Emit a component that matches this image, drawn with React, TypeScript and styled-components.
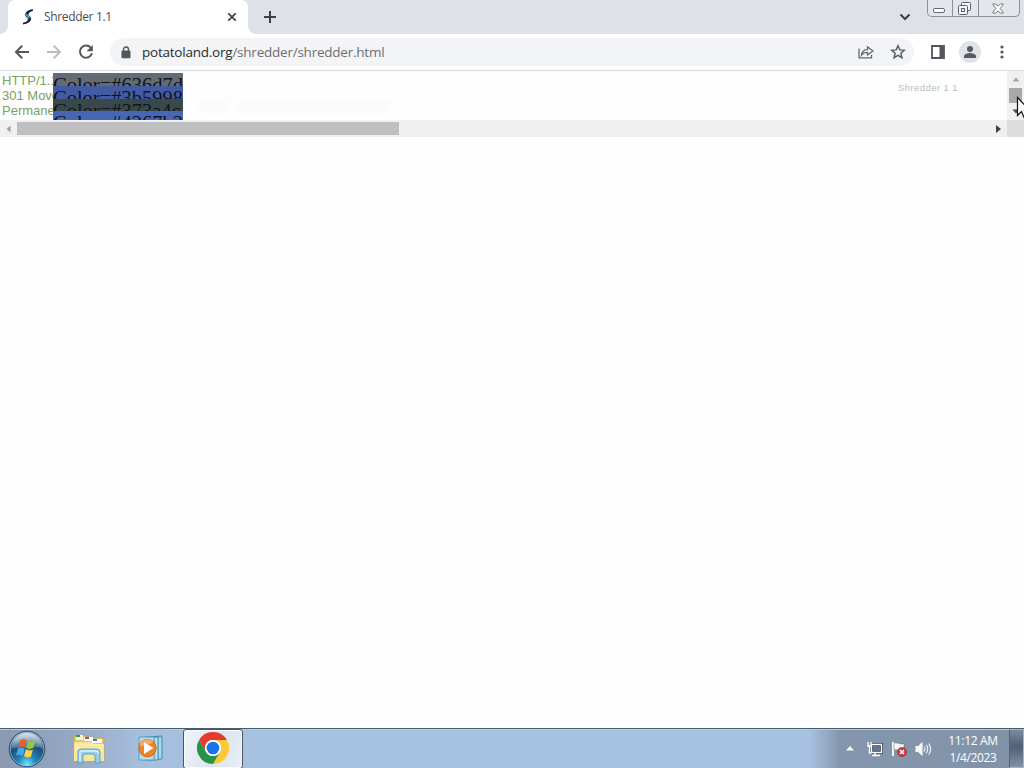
import React from 'react';
import styled, { createGlobalStyle } from 'styled-components';

const GlobalStyle = createGlobalStyle`
  * { box-sizing: border-box; }
  html, body { margin: 0; padding: 0; background: #fff; overflow: hidden; }
  svg { display: block; flex: none; }
`;

const Screen = styled.div`
  width: 1024px;
  height: 768px;
  display: flex;
  flex-direction: column;
  background: #fefefe;
  overflow: hidden;
  font-family: "Open Sans", "Noto Sans", sans-serif;
`;

const TabStrip = styled.header`
  height: 34px;
  display: flex;
  background: #dee1e6;
`;

const TabEdge = styled.div<{ $side: 'left' | 'right' }>`
  width: 8px;
  height: 34px;
  background: radial-gradient(circle at ${p => (p.$side === 'left' ? '0 26px' : '8px 26px')}, #dee1e6 7.5px, #fff 8px) no-repeat 0 100% / 8px 8px;
  background-image: radial-gradient(circle at ${p => (p.$side === 'left' ? '0 0' : '8px 0')}, #dee1e6 7.5px, #fff 8px);
`;

const Tab = styled.div`
  width: 240px;
  height: 34px;
  display: flex;
  align-items: center;
  background: #fff;
  border-radius: 7px 7px 0 0;
  padding: 0 10px 0 12px;
`;

const TabTitle = styled.span`
  flex: 1;
  margin-left: 8px;
  font-size: 12px;
  line-height: 16px;
  letter-spacing: -0.35px;
  color: #4b4e52;
`;

const NewTab = styled.div`
  width: 36px;
  height: 34px;
  display: flex;
  align-items: center;
  padding-left: 7px;
`;

const TabSearch = styled.div`
  margin-left: auto;
  margin-right: 16px;
  padding-top: 13px;
`;

const WindowButtons = styled.div`
  display: flex;
  width: 93px;
  height: 17px;
  margin-right: 4px;
  border: 1px solid #8b9096;
  border-top: 0;
  border-radius: 0 0 5px 5px;
  background: #e3e6ea;
`;

const WindowButton = styled.div<{ $w: number }>`
  width: ${p => p.$w}px;
  height: 16px;
  display: flex;
  align-items: center;
  justify-content: center;
  padding-right: 2px;
  & + & { border-left: 1px solid #8b9096; }
`;

const Toolbar = styled.nav`
  height: 37px;
  display: flex;
  align-items: center;
  background: #fff;
  border-bottom: 1px solid #d6d9dd;
  padding-left: 14px;
`;

const NavButton = styled.div`
  width: 16px;
  height: 16px;
  margin-right: 16px;
`;

const AddressBar = styled.div`
  width: 804px;
  height: 28px;
  display: flex;
  align-items: center;
  background: #f3f4f6;
  border-radius: 14px;
  padding: 0 8px 0 11px;
`;

const Url = styled.div`
  flex: 1;
  margin-left: 11px;
  font-size: 13.5px;
  line-height: 18px;
  letter-spacing: -0.23px;
  color: #6b6f74;
  white-space: nowrap;
`;

const Host = styled.span`
  color: #2a2d31;
`;

const BarIcon = styled.div<{ $ml: number }>`
  margin-left: ${p => p.$ml}px;
`;

const Avatar = styled.div`
  width: 22px;
  height: 22px;
  margin: 0 19px 0 13px;
  border-radius: 50%;
  background: #dfe3e7;
  display: flex;
  align-items: center;
  justify-content: center;
`;

const Page = styled.main`
  flex: 1;
  background: #fefefe;
`;

const Frame = styled.section`
  height: 66px;
  display: flex;
`;

const FrameBody = styled.div`
  width: 1007px;
  display: flex;
  flex-direction: column;
`;

const FrameView = styled.div`
  height: 49px;
  display: flex;
  overflow: hidden;
`;

const Response = styled.div`
  width: 53px;
  padding: 2px 0 0 2px;
  font: 13px/15px "Liberation Sans", Arial, sans-serif;
  color: #79a267;
  white-space: nowrap;
  overflow: hidden;
`;

const Swatches = styled.div`
  width: 130px;
  padding-top: 2px;
`;

const Swatch = styled.div<{ $h: number; $bg: string }>`
  height: ${p => p.$h}px;
  background: ${p => p.$bg};
  color: #10141c;
  padding-top: 1px;
  font: 20.5px/23px "Liberation Serif", "Times New Roman", serif;
  white-space: nowrap;
  overflow: hidden;
`;

const Ghost = styled.div`
  width: 190px;
  height: 12px;
  margin: 29px 0 0 17px;
  background: linear-gradient(90deg, #fafafa 15%, #fdfdfd 15% 20%, #fafafa 20%);
  filter: blur(2px);
`;

const FrameTitle = styled.div`
  margin: 10px 49px 0 auto;
  font: 9.5px/13px "Liberation Sans", Arial, sans-serif;
  letter-spacing: 0.42px;
  color: #bcbcbc;
  white-space: nowrap;
`;

const HScroll = styled.div`
  height: 17px;
  display: flex;
  align-items: center;
  background: #f0f0f0;
`;

const HThumb = styled.div`
  width: 382px;
  height: 13px;
  background: #bfbfbf;
`;

const HArrow = styled.div<{ $end?: boolean }>`
  width: 17px;
  display: flex;
  justify-content: center;
  margin-left: ${p => (p.$end ? 'auto' : '0')};
`;

const VScroll = styled.div`
  width: 17px;
  height: 66px;
  display: flex;
  flex-direction: column;
  align-items: center;
  background: linear-gradient(#f0f0f0 49px, #dcdcdc 49px);
  padding-top: 6px;
`;

const VThumb = styled.div`
  width: 13px;
  height: 15px;
  margin: 6px 0;
  background: #a8a8a8;
`;

const Cursor = styled.svg`
  position: absolute;
  left: 1016px;
  top: 96px;
`;

const Taskbar = styled.footer`
  height: 40px;
  display: flex;
  align-items: center;
  border-top: 1px solid #475c6d;
  box-shadow: inset 0 1px 0 #b9cce2;
  background: linear-gradient(90deg, #8999b0 0, #93a5bf 60px, #a5bedc 140px, #a7c1e0 250px, #a7c1e0 810px, #8496ad 840px, #8293a8 1024px);
`;

const TaskItem = styled.div<{ $ml: number }>`
  margin-left: ${p => p.$ml}px;
`;

const ActiveTask = styled.div`
  width: 60px;
  height: 40px;
  margin: 0 0 0 18px;
  padding-bottom: 2px;
  display: flex;
  align-items: center;
  justify-content: center;
  border: 1px solid #44576c;
  border-radius: 3px;
  box-shadow: inset 0 0 0 1px #f8fafc;
  background: linear-gradient(110deg, #f1f4f8, #dce4ee 55%, #e9eef4);
`;

const Tray = styled.div`
  margin-left: auto;
  display: flex;
  align-items: center;
`;

const Clock = styled.div`
  width: 72px;
  padding-top: 1px;
  text-align: center;
  font-size: 12px;
  line-height: 17px;
  letter-spacing: -0.35px;
  color: #fff;
`;

const ShowDesktop = styled.div`
  width: 15px;
  height: 39px;
  border: 1px solid #a8b5c4;
  border-left-color: #53647a;
  background: linear-gradient(#7b8b9f, #4f6077 45%, #8291a5);
`;

const SWATCHES = [
  { label: 'Color=#636d7d', bg: '#636b75', h: 13 },
  { label: 'Color=#3b5998', bg: '#435ba2', h: 13 },
  { label: 'Color=#373a4c', bg: '#39494b', h: 12 },
  { label: 'Color=#4267b2', bg: '#4767b5', h: 9 },
];

const Favicon = () => (
  <svg width="16" height="16" viewBox="0 0 16 16" fill="none">
    <path d="M13.2.8C8.6.6 5 3 5.1 6.2c.2 2.1 2.7 2.2 2.7 3.7 0 2-2.1 3.7-5.6 5.1 5.3-.1 8.7-2.4 8.9-5.5.1-2.3-2.6-2.6-2.5-4.1.1-1.6 1.7-2.7 4.6-4.6Z" fill="#20435c" />
    <path d="M6.4 5.2c.1 1.7 2.5 2.2 2.8 4" stroke="#3fa9bb" strokeWidth="2" />
    <path d="M12.8 1.1C9.8 1.5 7.6 2.7 7 4.6" stroke="#161d32" strokeWidth="1.8" />
    <path d="M10.2 9.3c0 2.4-3.2 4.6-7.2 5.4" stroke="#2d1c38" strokeWidth="1.7" />
  </svg>
);

const StartOrb = () => (
  <svg width="38" height="38" viewBox="0 0 38 38">
    <defs>
      <radialGradient id="orb" cx=".5" cy=".92" r=".85">
        <stop offset="0" stopColor="#6be6ff" />
        <stop offset=".3" stopColor="#2384b8" />
        <stop offset=".65" stopColor="#1c4e7c" />
        <stop offset="1" stopColor="#7e9eb7" />
      </radialGradient>
      <linearGradient id="shine" x2="0" y2="1">
        <stop stopColor="#fff" stopOpacity=".68" />
        <stop offset="1" stopColor="#fff" stopOpacity=".14" />
      </linearGradient>
    </defs>
    <circle cx="19" cy="19" r="17.8" fill="url(#orb)" stroke="#284966" />
    <circle cx="19" cy="19" r="16.8" fill="none" stroke="#b5d8e7" strokeOpacity=".55" />
    <path d="M3.5 18C4 9 11 3 19 3s15 6 15.5 15C26 15 14 20 3.5 18Z" fill="url(#shine)" />
    <path d="M12.2 10.2c2.3-1.3 4.4-1.1 6.6.2l-1.8 7c-2.2-1.4-4.4-1.5-6.7-.3Z" fill="#e85e2c" />
    <path d="M20 11c2.3 1.2 4.5 1.3 7.2 0l-2 7.1c-2.6 1.2-4.8 1-7-.4Z" fill="#94c746" />
    <path d="M10 18.5c2.3-1.2 4.5-1 6.7.3l-1.8 7c-2.2-1.3-4.4-1.5-6.8-.4Z" fill="#4aa9e3" />
    <path d="M17.9 19.3c2.3 1.3 4.5 1.5 7 .4l-2 7.1c-2.6 1.1-4.7.8-6.9-.5Z" fill="#ffd146" />
  </svg>
);

const Explorer = () => (
  <svg width="34" height="32" viewBox="0 0 34 32">
    <path d="M2 5V3h12l2 2h16v23H2Z" fill="#e7c65f" stroke="#bfa04b" strokeWidth=".7" />
    <path d="M4 2h7v5H4Z" fill="#f7f7e5" /><path d="M4 2h4v2H4Z" fill="#339c41" />
    <path d="M12 4h9v4h-9Z" fill="#fff" /><path d="M13 4h4v2h-4Z" fill="#b85532" />
    <path d="M20 6h10v4H20Z" fill="#fff" /><path d="M21 6h4v2h-4Z" fill="#397bb5" />
    <path d="M2 9h18l2 2h10v17H2Z" fill="#f8e69b" />
    <path d="M3 12h28M3 15h28" stroke="#fff4bf" />
    <path d="M6 30V19q0-3 3-3h16q3 0 3 3v11h-5v-7q0-2-2-2h-8q-2 0-2 2v7Z" fill="#99cce8" stroke="#5da0ca" />
    <path d="M8 28V19q0-1 2-1h14q2 0 2 1v2" fill="none" stroke="#d9f3fc" strokeWidth="1.5" />
  </svg>
);

const MediaPlayer = () => (
  <svg width="28" height="27" viewBox="0 0 28 27">
    <path d="M12 2 25 1v23l-13 1Z" fill="#8cc8e0" stroke="#488fb1" />
    <path d="M8 2h13v23H8Z" fill="#9dd3e6" stroke="#478faf" />
    <path d="M2 2h15v23H2Z" fill="#b4dcec" stroke="#5a9db8" />
    <path d="M19.5 3v21m3.5-21v20" stroke="#c8edf7" />
    <circle cx="10.5" cy="13" r="8.7" fill="#ed8424" stroke="#ca6a1b" />
    <path d="M2.5 11a8 8 0 0 1 14-4q-6 4-14 4Z" fill="#f7ab61" />
    <path d="m7 7 9.5 6L7 19Z" fill="#fff" />
  </svg>
);

const Chrome = () => (
  <svg width="32" height="32" viewBox="0 0 32 32">
    <path d="M2.14 8A16 16 0 0 1 29.86 8H16a8 8 0 0 0-6.93 12Z" fill="#e33b2e" />
    <path d="M29.86 8A16 16 0 0 1 16 32l6.93-12A8 8 0 0 0 16 8Z" fill="#fcc934" />
    <path d="M16 32A16 16 0 0 1 2.14 8l6.93 12a8 8 0 0 0 13.86 0Z" fill="#269447" />
    <circle cx="16" cy="16" r="8" fill="#fff" /><circle cx="16" cy="16" r="6.3" fill="#1a73e8" />
  </svg>
);

export default function App() {
  return (
    <>
      <GlobalStyle />
      <Screen>
        <TabStrip>
          <TabEdge $side="left" />
          <Tab>
            <Favicon />
            <TabTitle>Shredder 1.1</TabTitle>
            <svg width="12" height="12" viewBox="0 0 12 12" stroke="#3c4043" strokeWidth="1.7"><path d="m2.3 2.3 7.4 7.4m0-7.4L2.3 9.7" /></svg>
          </Tab>
          <TabEdge $side="right" />
          <NewTab>
            <svg width="14" height="14" viewBox="0 0 14 14" stroke="#3c4043" strokeWidth="2"><path d="M7 1v12M1 7h12" /></svg>
          </NewTab>
          <TabSearch>
            <svg width="12" height="8" viewBox="0 0 12 8" fill="none" stroke="#3c4043" strokeWidth="2"><path d="m1.5 1.5 4.5 4.5 4.5-4.5" /></svg>
          </TabSearch>
          <WindowButtons>
            <WindowButton $w={24}>
              <svg width="12" height="12" viewBox="0 0 12 12"><rect x=".5" y="6.5" width="11" height="4" rx="1.5" fill="#fff" stroke="#62686e" /></svg>
            </WindowButton>
            <WindowButton $w={26}>
              <svg width="13" height="13" viewBox="0 0 13 13" fill="#f5f6f7" stroke="#596067"><rect x="3.5" y=".5" width="9" height="8" rx="1" /><rect x=".5" y="3.5" width="9" height="9" rx="1" /><rect x="3.5" y="6.5" width="3" height="3" /></svg>
            </WindowButton>
            <WindowButton $w={41}>
              <svg width="12" height="11" viewBox="0 0 13 11" fill="#fff" stroke="#6a7076"><path d="M1 .5h3L6.5 3 9 .5h3v1L8.8 5.5 12 9.5v1H9L6.5 8 4 10.5H1v-1l3.2-4L1 1.5Z" /></svg>
            </WindowButton>
          </WindowButtons>
        </TabStrip>

        <Toolbar>
          <NavButton><svg width="16" height="16" viewBox="0 0 16 16" fill="none" stroke="#53575b" strokeWidth="2"><path d="M15 8H2.5M8.2 1.8 2 8l6.2 6.2" /></svg></NavButton>
          <NavButton><svg width="16" height="16" viewBox="0 0 16 16" fill="none" stroke="#bbbdc0" strokeWidth="2"><path d="M1 8h12.5M7.8 1.8 14 8l-6.2 6.2" /></svg></NavButton>
          <NavButton><svg width="16" height="16" viewBox="0 0 16 16" fill="none" stroke="#53575b" strokeWidth="2"><path d="M12.7 3.6A6.1 6.1 0 1 0 14 9.2" /><path d="M14.8 1v6.3H8.5Z" fill="#53575b" stroke="none" /></svg></NavButton>
          <AddressBar>
            <svg width="10" height="13" viewBox="0 0 10 13"><path d="M2.5 6V3.5a2.5 2.5 0 0 1 5 0V6" fill="none" stroke="#53575b" strokeWidth="1.4" /><rect x=".5" y="4.6" width="9" height="7.6" rx="1" fill="#53575b" /></svg>
            <Url><Host>potatoland.org</Host>/shredder/shredder.html</Url>
            <svg width="16" height="14" viewBox="0 0 16 14" fill="none" stroke="#65696d" strokeWidth="1.3"><path d="M1 3.5v9.3h12.5v-3M3.5 10C4 6.4 6.3 4.7 9.5 4.7V1.8L15 6l-5.5 4V7.4C7 7.4 5 8 3.5 10Z" /></svg>
            <BarIcon $ml={16}><svg width="16" height="16" viewBox="0 0 16 16" fill="none" stroke="#5a5e62" strokeWidth="1.5"><path d="m8 1.8 1.8 4.1 4.4.4-3.3 2.9 1 4.4L8 11.3l-3.9 2.3 1-4.4-3.3-2.9 4.4-.4Z" /></svg></BarIcon>
          </AddressBar>
          <BarIcon $ml={16}><svg width="16" height="16" viewBox="0 0 16 16"><path d="M2 2h12v12H2Z" fill="none" stroke="#53575b" strokeWidth="1.8" /><path d="M9.5 2H14v12H9.5Z" fill="#53575b" /></svg></BarIcon>
          <Avatar><svg width="14" height="14" viewBox="0 0 14 14" fill="#535c61"><circle cx="7" cy="4" r="3" /><path d="M1 13v-1.8C1 9 5 8.1 7 8.1s6 .9 6 3.1V13Z" /></svg></Avatar>
          <svg width="4" height="14" viewBox="0 0 4 14" fill="#53575b"><circle cx="2" cy="2" r="1.6" /><circle cx="2" cy="7" r="1.6" /><circle cx="2" cy="12" r="1.6" /></svg>
        </Toolbar>

        <Page>
          <Frame>
            <FrameBody>
              <FrameView>
                <Response>HTTP/1.1<br />301 Moved<br />Permanently</Response>
                <Swatches>
                  {SWATCHES.map(s => <Swatch key={s.label} $h={s.h} $bg={s.bg}>{s.label}</Swatch>)}
                </Swatches>
                <Ghost />
                <FrameTitle>Shredder 1 1</FrameTitle>
              </FrameView>
              <HScroll>
                <HArrow><svg width="5" height="8" viewBox="0 0 5 8"><path d="M4.5.5v7L.5 4Z" fill="#a0a0a0" /></svg></HArrow>
                <HThumb />
                <HArrow $end><svg width="5" height="8" viewBox="0 0 5 8"><path d="M0 0v8l5-4Z" fill="#414141" /></svg></HArrow>
              </HScroll>
            </FrameBody>
            <VScroll>
              <svg width="8" height="5" viewBox="0 0 8 5"><path d="M.5 4.5h7L4 .5Z" fill="#a3a3a3" /></svg>
              <VThumb />
              <svg width="8" height="5" viewBox="0 0 8 5"><path d="M.5.5h7L4 4.5Z" fill="#4b4b4b" /></svg>
            </VScroll>
          </Frame>
        </Page>

        <Taskbar>
          <TaskItem $ml={8}><StartOrb /></TaskItem>
          <TaskItem $ml={26}><Explorer /></TaskItem>
          <TaskItem $ml={31}><MediaPlayer /></TaskItem>
          <ActiveTask><Chrome /></ActiveTask>
          <Tray>
            <svg width="8" height="5" viewBox="0 0 8 5"><path d="M0 4.5h8L4 0Z" fill="#f5f7fa" /></svg>
            <TaskItem $ml={13}><svg width="16" height="16" viewBox="0 0 16 16"><path d="M4.5 3.5h10v8h-10Z" fill="#65758b" stroke="#354355" strokeWidth="3" /><path d="M4.5 3.5h10v8h-10ZM8 12v2.5M5 14.5h8M1 1v4h3V1M2.5 5v7h2" fill="none" stroke="#fff" strokeWidth="1.4" /></svg></TaskItem>
            <TaskItem $ml={8}><svg width="16" height="16" viewBox="0 0 16 16"><path d="M2 1v14" stroke="#fff" strokeWidth="1.8" /><path d="M3 2c4-1 5 2 10 .7V10C9 11 7 8 3 9Z" fill="#f8f9fb" stroke="#596675" strokeWidth=".5" /><circle cx="11" cy="11" r="4.6" fill="#d83238" stroke="#8d3140" strokeWidth=".6" /><path d="m9 9 4 4m0-4-4 4" stroke="#fff" strokeWidth="1.6" /></svg></TaskItem>
            <TaskItem $ml={8}><svg width="17" height="16" viewBox="0 0 17 16" fill="none" stroke="#f6f7f9" strokeWidth="1.1"><path d="M1 5.5h2.5L7 2v12l-3.5-3.5H1Z" fill="#f6f7f9" /><path d="M9 5.5q1.8 2.5 0 5M11.3 3.8q2.8 4.2 0 8.4M13.7 2.5q3.8 5.5 0 11" /></svg></TaskItem>
            <TaskItem $ml={5}><Clock>11:12 AM<br />1/4/2023</Clock></TaskItem>
            <ShowDesktop />
          </Tray>
        </Taskbar>
        <Cursor width="8" height="24" viewBox="0 0 8 24"><path d="M1.5 1.5v18l4-4 3 7 3-1.4-3-6.4H14Z" fill="#fff" stroke="#111" strokeWidth="1.2" /></Cursor>
      </Screen>
    </>
  );
}
